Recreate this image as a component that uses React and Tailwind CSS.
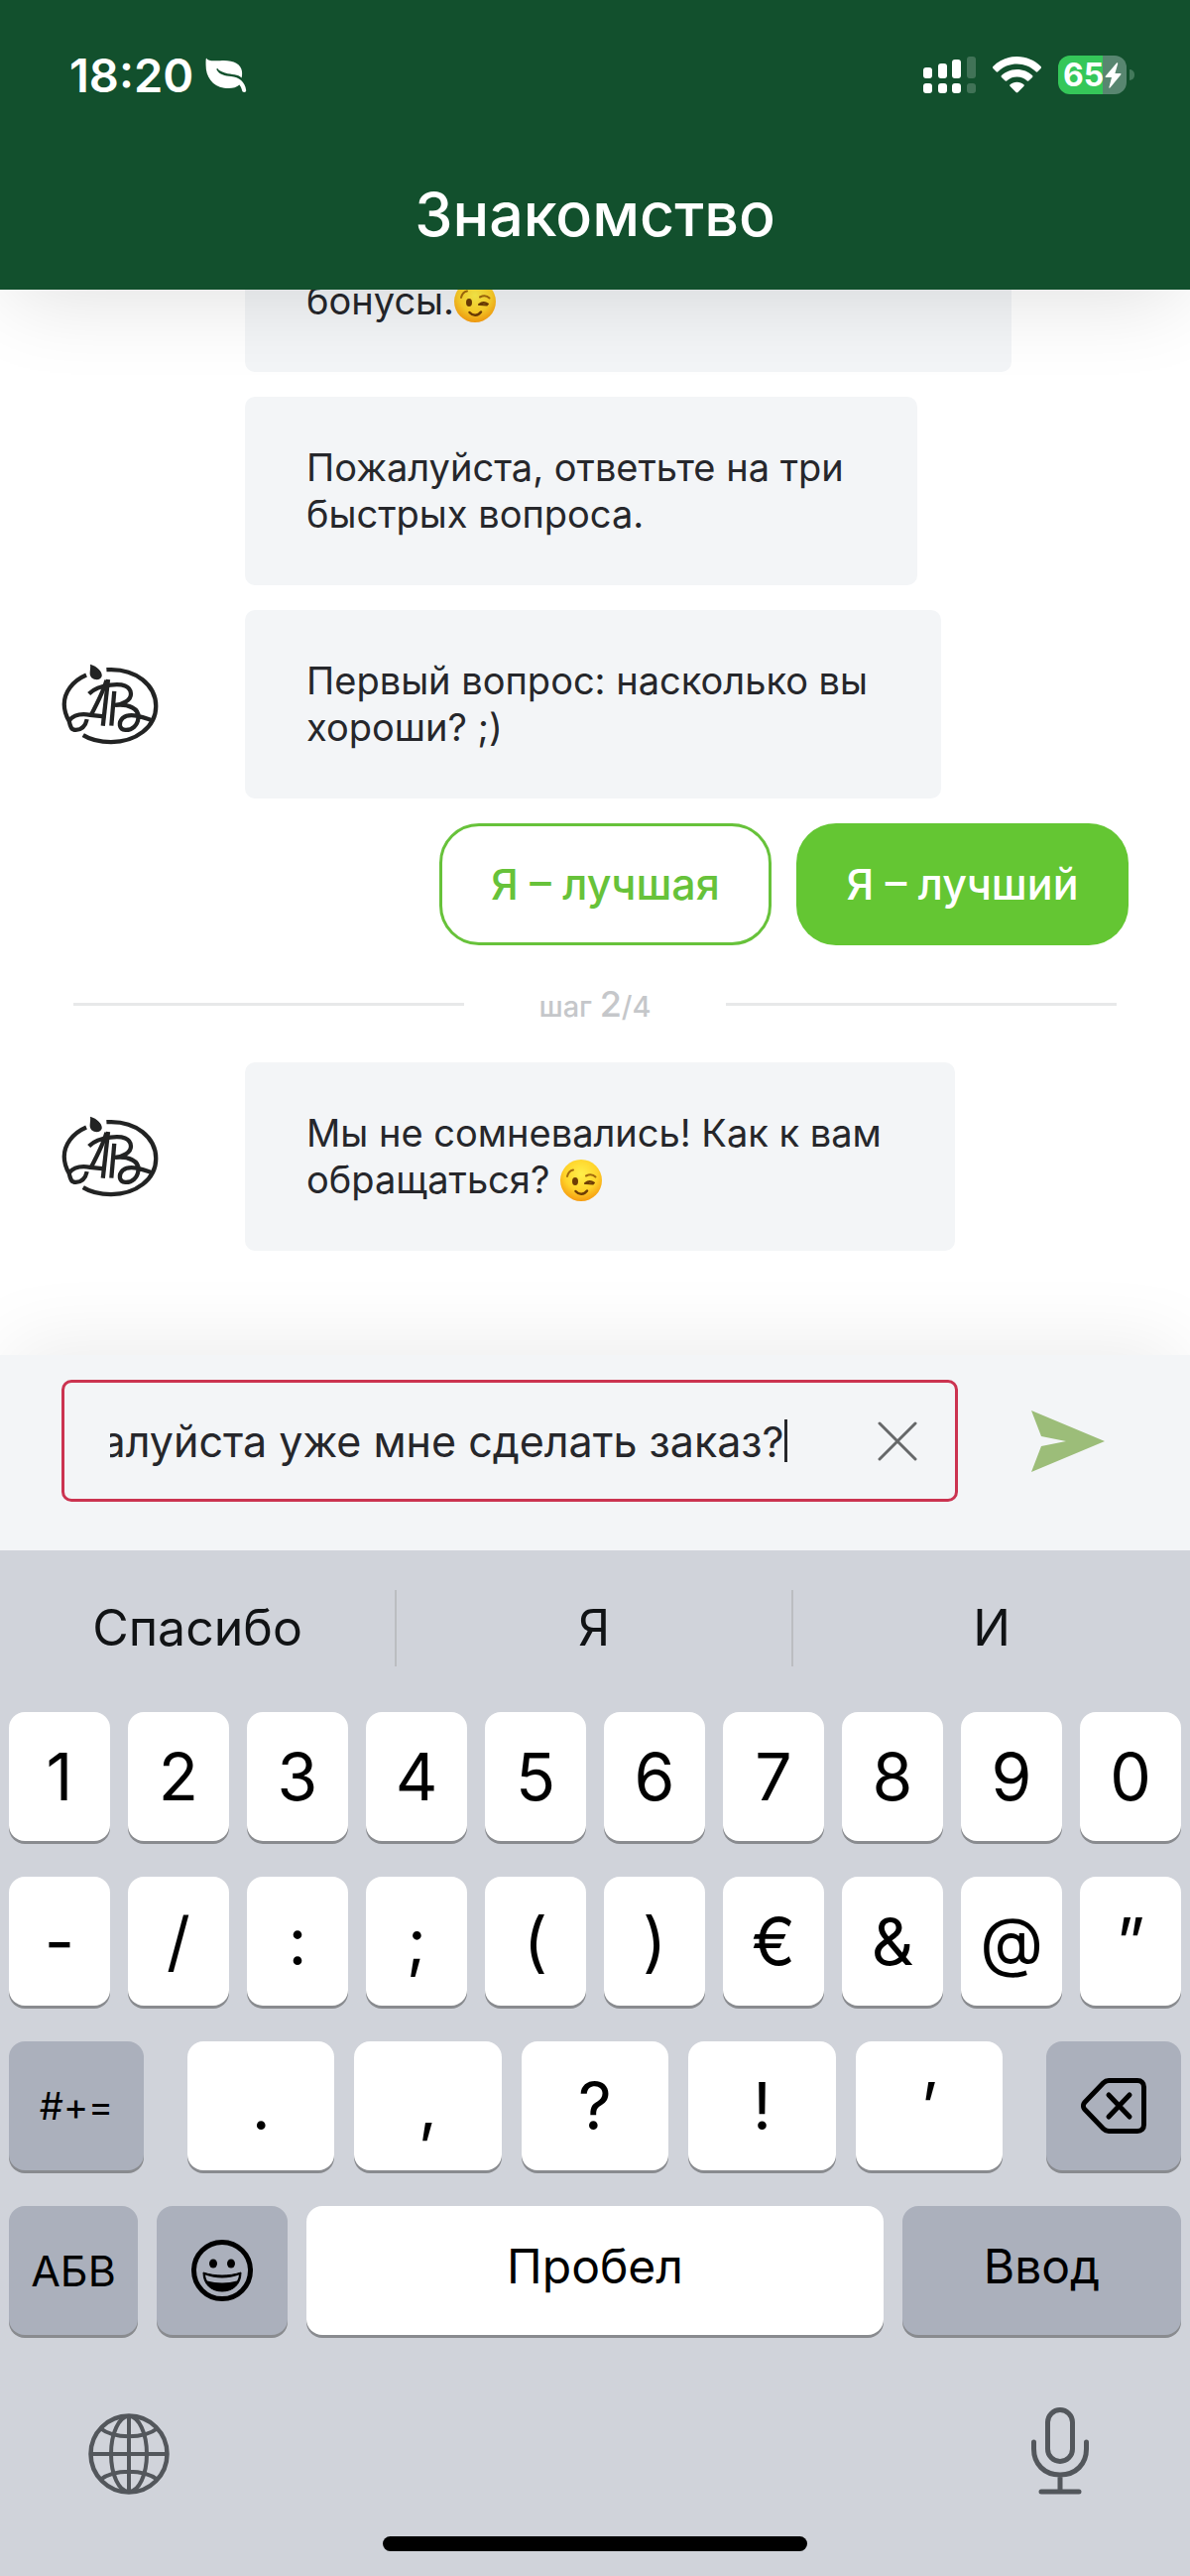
import { useEffect, useRef, useState } from "react";

const digits = ["1", "2", "3", "4", "5", "6", "7", "8", "9", "0"];
const symbols = ["-", "/", ":", ";", "(", ")", "€", "&", "@", "”"];
const punctuation = [".", ",", "?", "!", "’"];
const suggestions = ["Спасибо", "Я", "И"];

const LeafIcon = () => (
  <svg viewBox="0 0 42 36" className="w-[42px] h-9" fill="white" aria-hidden="true">
    <path d="M1 0.5C3 4 8 3.4 15 3.2C27 2.2 36 6 37 14C37.3 17 37 19 36.6 20.5C33 16.5 27 17.5 20 15.5C16 14.3 13.5 12.8 12.6 11.2C12 10.4 11 11.4 11.6 12.4C14 17 20 18.4 26 19C34 20 40 24 41.2 33C41.4 35.4 37.6 35.8 37.2 33.6C36.6 31 35.6 29 34.4 27.6C31 31 25 31.6 19 30.8C7 29 0.5 19 0.6 8C0.6 5 0.4 2.5 1 0.5Z" />
  </svg>
);

const SignalIcon = () => (
  <svg viewBox="0 0 53 37" className="w-[53px] h-[37px]" fill="white" aria-hidden="true">
    <rect x="0" y="11" width="9" height="11" rx="3" />
    <rect x="15" y="7" width="9" height="15" rx="3" />
    <rect x="29" y="3" width="9" height="19" rx="3" />
    <rect x="44" y="0" width="9" height="22" rx="3" opacity="0.2" />
    <rect x="0" y="27" width="9" height="10" rx="3" />
    <rect x="15" y="27" width="9" height="10" rx="3" />
    <rect x="29" y="27" width="9" height="10" rx="3" />
    <rect x="44" y="27" width="9" height="10" rx="3" opacity="0.2" />
  </svg>
);

const WifiIcon = () => (
  <svg viewBox="0 0 49 37" className="w-[49px] h-[37px]" fill="white" aria-hidden="true">
    <path d="M24.5 0C34 0 42.500 3.800 48.600 10C49.200 10.600 49.200 11.300 48.600 11.900L45.400 15.200C44.800 15.800 44.200 15.800 43.600 15.200C38.500 10.400 31.800 7.600 24.500 7.600C17.200 7.600 10.500 10.400 5.400 15.200C4.800 15.800 4.200 15.800 3.600 15.200L0.400 11.900C-0.200 11.300 -0.200 10.600 0.400 10C6.500 3.800 15 0 24.500 0Z" />
    <path d="M24.500 13C30.600 13 36 15.300 40 19.100C40.600 19.700 40.600 20.300 40 20.900L36.600 24.300C36 24.900 35.400 24.900 34.800 24.400C32 22 28.500 20.500 24.500 20.500C20.500 20.500 17 22 14.200 24.400C13.600 24.900 13 24.900 12.400 24.300L9 20.900C8.400 20.300 8.400 19.700 9 19.100C13 15.300 18.400 13 24.500 13Z" />
    <path d="M24.500 25.800C27.200 25.800 29.600 26.700 31.400 28.200C32 28.700 32 29.400 31.400 30L25.500 36C24.900 36.600 24.100 36.600 23.500 36L17.600 30C17 29.400 17 28.700 17.600 28.200C19.400 26.700 21.800 25.800 24.500 25.800Z" />
  </svg>
);

const Battery = () => (
  <div className="flex items-center gap-[3px]">
    <div className="flex items-center justify-center gap-px w-[69px] h-[39px] rounded-xl bg-[linear-gradient(to_right,#35c759_65%,#588670_65%)]">
      <span className="text-[32px] leading-[39px] font-bold text-white">65</span>
      <svg viewBox="0 0 17 26" className="w-[17px] h-[26px]" fill="white" aria-hidden="true">
        <path d="M12 0.500L0.800 13.800C0.400 14.400 0.600 15 1.400 15H7L4.400 25C4.300 25.800 5 26 5.600 25.300L16.300 12.300C16.700 11.700 16.500 11 15.700 11H10.400L13.200 1.200C13.400 0.300 12.600 -0.100 12 0.500Z" />
      </svg>
    </div>
    <span className="w-[5px] h-[11px] rounded-r-full bg-[#43795b]" />
  </div>
);

const Logo = () => (
  <svg
    viewBox="34 43 298 250"
    className="w-[98px] h-[82px]"
    fill="none"
    stroke="#222323"
    strokeWidth="13"
    role="img"
    aria-label="АВ"
  >
    <path d="M172 62C265 56 324 112 324 174C324 238 262 284 186 284C152 284 124 278 100 263" />
    <path d="M110 78C66 97 42 132 42 168C42 188 48 204 57 220C61 238 64 247 78 247C98 246 108 232 112 214" />
    <path d="M57 218C72 200 96 196 122 201L166 206" />
    <path d="M118 136C134 120 158 112 184 109C222 104 246 112 247 136C247 156 224 168 198 171C240 166 272 182 270 208C268 234 250 248 230 247C210 245 208 224 222 210C244 192 286 208 316 219" />
    <path d="M172 94C162 130 142 168 124 202" />
    <path d="M177 92L161 234" />
    <path d="M196 128L187 234" />
    <path d="M122 45C144 52 158 66 158 80C156 90 148 93 138 92C126 90 120 82 121 70C122 60 123 52 122 45Z" fill="#222323" stroke="none" />
  </svg>
);

const WinkEmoji = () => (
  <svg viewBox="0 0 42 42" className="inline-block w-[42px] h-[42px] align-[-8px]" role="img" aria-label="😉">
    <defs>
      <radialGradient id="wink-face" cx="0.5" cy="0.35" r="0.66">
        <stop offset="0" stopColor="#fff04a" />
        <stop offset="0.6" stopColor="#ffd32a" />
        <stop offset="1" stopColor="#f59a10" />
      </radialGradient>
    </defs>
    <circle cx="21" cy="21" r="21" fill="url(#wink-face)" />
    <ellipse cx="15" cy="22" rx="3" ry="4" fill="#6e3d05" />
    <g fill="none" stroke="#6e3d05" strokeWidth="2" strokeLinecap="round">
      <path d="M7 17C8 13 10 11 13 10.500" stroke="#a36a0c" />
      <path d="M26 16.500C30 14.500 33 15 35.500 17.500" stroke="#a36a0c" />
      <path d="M25 24C28 21.500 31 21.500 34 23.500M26 24L33 24.500" />
      <path d="M15.500 32C19 36 24 35.500 27 31.500" strokeWidth="2.500" />
    </g>
  </svg>
);

const SendIcon = () => (
  <svg viewBox="0 0 74 62" className="w-[74px] h-[62px]" fill="#9cbd79" aria-hidden="true">
    <path d="M0 0L74 31L0 62L10 36L35 31L10 26Z" />
  </svg>
);

const CloseIcon = () => (
  <svg viewBox="0 0 40 40" className="w-10 h-10" stroke="#666869" strokeWidth="3" strokeLinecap="round" aria-hidden="true">
    <path d="M2 2L38 38M38 2L2 38" />
  </svg>
);

const BackspaceIcon = () => (
  <svg viewBox="0 0 66 56" className="w-[66px] h-14" fill="none" stroke="black" strokeWidth="5" strokeLinejoin="round" strokeLinecap="round" aria-hidden="true">
    <path d="M28 2.500H57C61 2.500 63.500 5 63.500 9V47C63.500 51 61 53.500 57 53.500H28C25.500 53.500 24 52.500 22.500 51L3.800 31.500C2 29.500 2 26.500 3.800 24.500L22.500 5C24 3.500 25.500 2.500 28 2.500Z" />
    <path d="M28 17L49 39M49 17L28 39" />
  </svg>
);

const SmileIcon = () => (
  <svg viewBox="0 0 62 62" className="w-[62px] h-[62px]" aria-hidden="true">
    <circle cx="31" cy="31" r="28.500" fill="none" stroke="black" strokeWidth="5" />
    <ellipse cx="22" cy="24" rx="4" ry="4.500" />
    <ellipse cx="40" cy="24" rx="4" ry="4.500" />
    <path d="M12 33C24 37 38 37 50 33C50 45 42 52 31 52C20 52 12 45 12 33Z" stroke="black" strokeWidth="1" />
    <path d="M14 35.500C25 39.500 37 39.500 48 35.500C47.600 38 47 40 46 41.500C37 44 25 44 16 41.500C15 40 14.400 38 14 35.500Z" fill="#abb0bc" />
  </svg>
);

const GlobeIcon = () => (
  <svg viewBox="0 0 82 82" className="w-[82px] h-[82px]" fill="none" stroke="#53575c" strokeWidth="4" aria-hidden="true">
    <circle cx="41" cy="41" r="38.500" strokeWidth="4.500" />
    <ellipse cx="41" cy="41" rx="18" ry="38" />
    <path d="M41 3V79M3 41H79M12 15C26 26 56 26 70 15M12 67C26 56 56 56 70 67" />
  </svg>
);

const MicIcon = () => (
  <svg viewBox="0 0 58 88" className="w-[58px] h-[88px]" fill="none" stroke="#53575c" strokeWidth="5" strokeLinecap="round" aria-hidden="true">
    <rect x="16.500" y="2.500" width="25" height="52" rx="12.500" />
    <path d="M2.500 35V42C2.500 57 13 68 29 68C45 68 55.500 57 55.500 42V35M29 68V85M10 85H48" />
  </svg>
);

const Message = ({ avatar, children }) => (
  <div className="flex items-center">
    <div className="w-[185px] shrink-0">{avatar && <Logo />}</div>
    <p className="pl-[62px] pr-[74px] py-12 rounded-[10px] bg-[#f3f5f7] text-[38px] leading-[47px] text-[#26272b]">
      {children}
    </p>
  </div>
);

const Key = ({ label, className = "", dark, children }) => (
  <button
    type="button"
    aria-label={label}
    className={`flex items-center justify-center h-[130px] rounded-2xl text-black shadow-[0_3px_0_#898b8f] ${
      dark ? "bg-[#abb0bc]" : "bg-white"
    } ${className}`}
  >
    {children}
  </button>
);

const Keyboard = () => (
  <section aria-label="Клавиатура" className="relative bg-[#d0d3da] pt-10 pb-[25px]">
    <div className="grid grid-cols-3 divide-x-2 divide-[#bbbdc1] mb-[46px]">
      {suggestions.map((word) => (
        <button key={word} type="button" className="h-[77px] text-[50px] leading-[77px] text-[#111315]">
          {word}
        </button>
      ))}
    </div>

    <div className="flex flex-col gap-9 px-[9px]">
      <div className="grid grid-cols-10 gap-[18px]">
        {digits.map((key) => (
          <Key key={key} className="text-[66px]">{key}</Key>
        ))}
      </div>
      <div className="grid grid-cols-10 gap-[18px]">
        {symbols.map((key) => (
          <Key key={key} className="text-[66px]">{key}</Key>
        ))}
      </div>
      <div className="flex gap-11">
        <Key dark className="w-[136px] text-[38px]">#+=</Key>
        <div className="flex-1 grid grid-cols-5 gap-5">
          {punctuation.map((key) => (
            <Key key={key} className="text-[66px]">{key}</Key>
          ))}
        </div>
        <Key dark label="Удалить" className="w-[136px]">
          <BackspaceIcon />
        </Key>
      </div>
      <div className="flex gap-[19px]">
        <Key dark className="w-[130px] text-[43px]">АБВ</Key>
        <Key dark label="Эмодзи" className="w-[132px]">
          <SmileIcon />
        </Key>
        <Key className="flex-1 pb-2 text-[48px]">Пробел</Key>
        <Key dark className="w-[281px] pb-2 text-[48px]">Ввод</Key>
      </div>
    </div>

    <div className="flex items-end justify-between pt-[73px] pl-[89px] pr-[102px]">
      <button type="button" aria-label="Сменить язык">
        <GlobeIcon />
      </button>
      <button type="button" aria-label="Диктовка">
        <MicIcon />
      </button>
    </div>
    <div className="w-[428px] h-[15px] mt-[42px] mx-auto rounded-full bg-black" />
  </section>
);

const App = () => {
  const [text, setText] = useState("Пожалуйста уже мне сделать заказ?");
  const inputRef = useRef(null);

  // Keep the end of a long message in view
  useEffect(() => {
    inputRef.current.scrollLeft = inputRef.current.scrollWidth;
  }, [text]);

  return (
    <div className="w-full bg-white font-[Inter,'Liberation_Sans',sans-serif]">
      <header className="relative z-10 pt-14 pb-[46px] bg-[#12502d] shadow-[0_20px_80px_-10px_rgba(0,0,0,0.12)]">
        <div className="flex items-center justify-between h-[39px] pl-[70px] pr-14">
          <div className="flex items-center gap-3">
            <span className="text-[47px] leading-[39px] font-semibold text-white">18:20</span>
            <LeafIcon />
          </div>
          <div className="flex items-center gap-[17px]">
            <SignalIcon />
            <WifiIcon />
            <Battery />
          </div>
        </div>
        <h1 className="mt-[91px] text-center text-[61px] leading-[60px] font-medium text-white">Знакомство</h1>
      </header>

      <main className="overflow-hidden px-[62px] pb-[105px]">
        <div className="flex flex-col gap-[25px]">
          <div className="-mt-3 ml-[185px] w-[773px] max-w-full pl-[62px] pb-12 rounded-b-[10px] bg-[#f3f5f7] text-[38px] leading-[47px] text-[#26272b]">
            бонусы.
            <WinkEmoji />
          </div>
          <Message>
            Пожалуйста, ответьте на три
            <br />
            быстрых вопроса.
          </Message>
          <Message avatar>
            Первый вопрос: насколько вы
            <br />
            хороши? ;)
          </Message>
          <div className="flex justify-end gap-[25px] text-[43px] font-medium">
            <button type="button" className="w-[335px] h-[123px] rounded-[40px] border-3 border-[#67c23a] text-[#67c23a]">
              Я – лучшая
            </button>
            <button type="button" className="w-[335px] h-[123px] rounded-[40px] bg-[#64c633] text-white">
              Я – лучший
            </button>
          </div>
        </div>

        <div className="flex items-center gap-[75px] h-[118px] px-3 text-[29px] font-medium text-[#c5c7ca]">
          <span className="flex-1 h-[3px] bg-[#e7e8e9]" />
          <span>
            шаг <span className="text-[36px]">2</span>/4
          </span>
          <span className="flex-1 h-[3px] bg-[#e7e8e9]" />
        </div>

        <Message avatar>
          Мы не сомневались! Как к вам
          <br />
          обращаться? <WinkEmoji />
        </Message>
      </main>

      <form
        onSubmit={(e) => e.preventDefault()}
        className="relative flex items-center gap-[74px] pt-[25px] pb-[49px] pl-[62px] pr-[86px] bg-[#f3f5f7] shadow-[0_-20px_80px_-10px_rgba(0,0,0,0.08)]"
      >
        <div className="flex flex-1 min-w-0 items-center h-[123px] pl-[46px] pr-[38px] border-3 border-[#cb3350] rounded-[10px]">
          <input
            ref={inputRef}
            type="text"
            aria-label="Сообщение"
            value={text}
            onChange={(e) => setText(e.target.value)}
            className="flex-1 min-w-0 text-[43px] leading-[60px] text-[#26272b] caret-transparent outline-none"
          />
          <span className="w-[3px] h-[43px] mr-[91px] bg-[#26272b]" />
          <button type="button" aria-label="Очистить" onClick={() => setText("")}>
            <CloseIcon />
          </button>
        </div>
        <button type="submit" aria-label="Отправить">
          <SendIcon />
        </button>
      </form>

      <Keyboard />
    </div>
  );
};

export default App;
